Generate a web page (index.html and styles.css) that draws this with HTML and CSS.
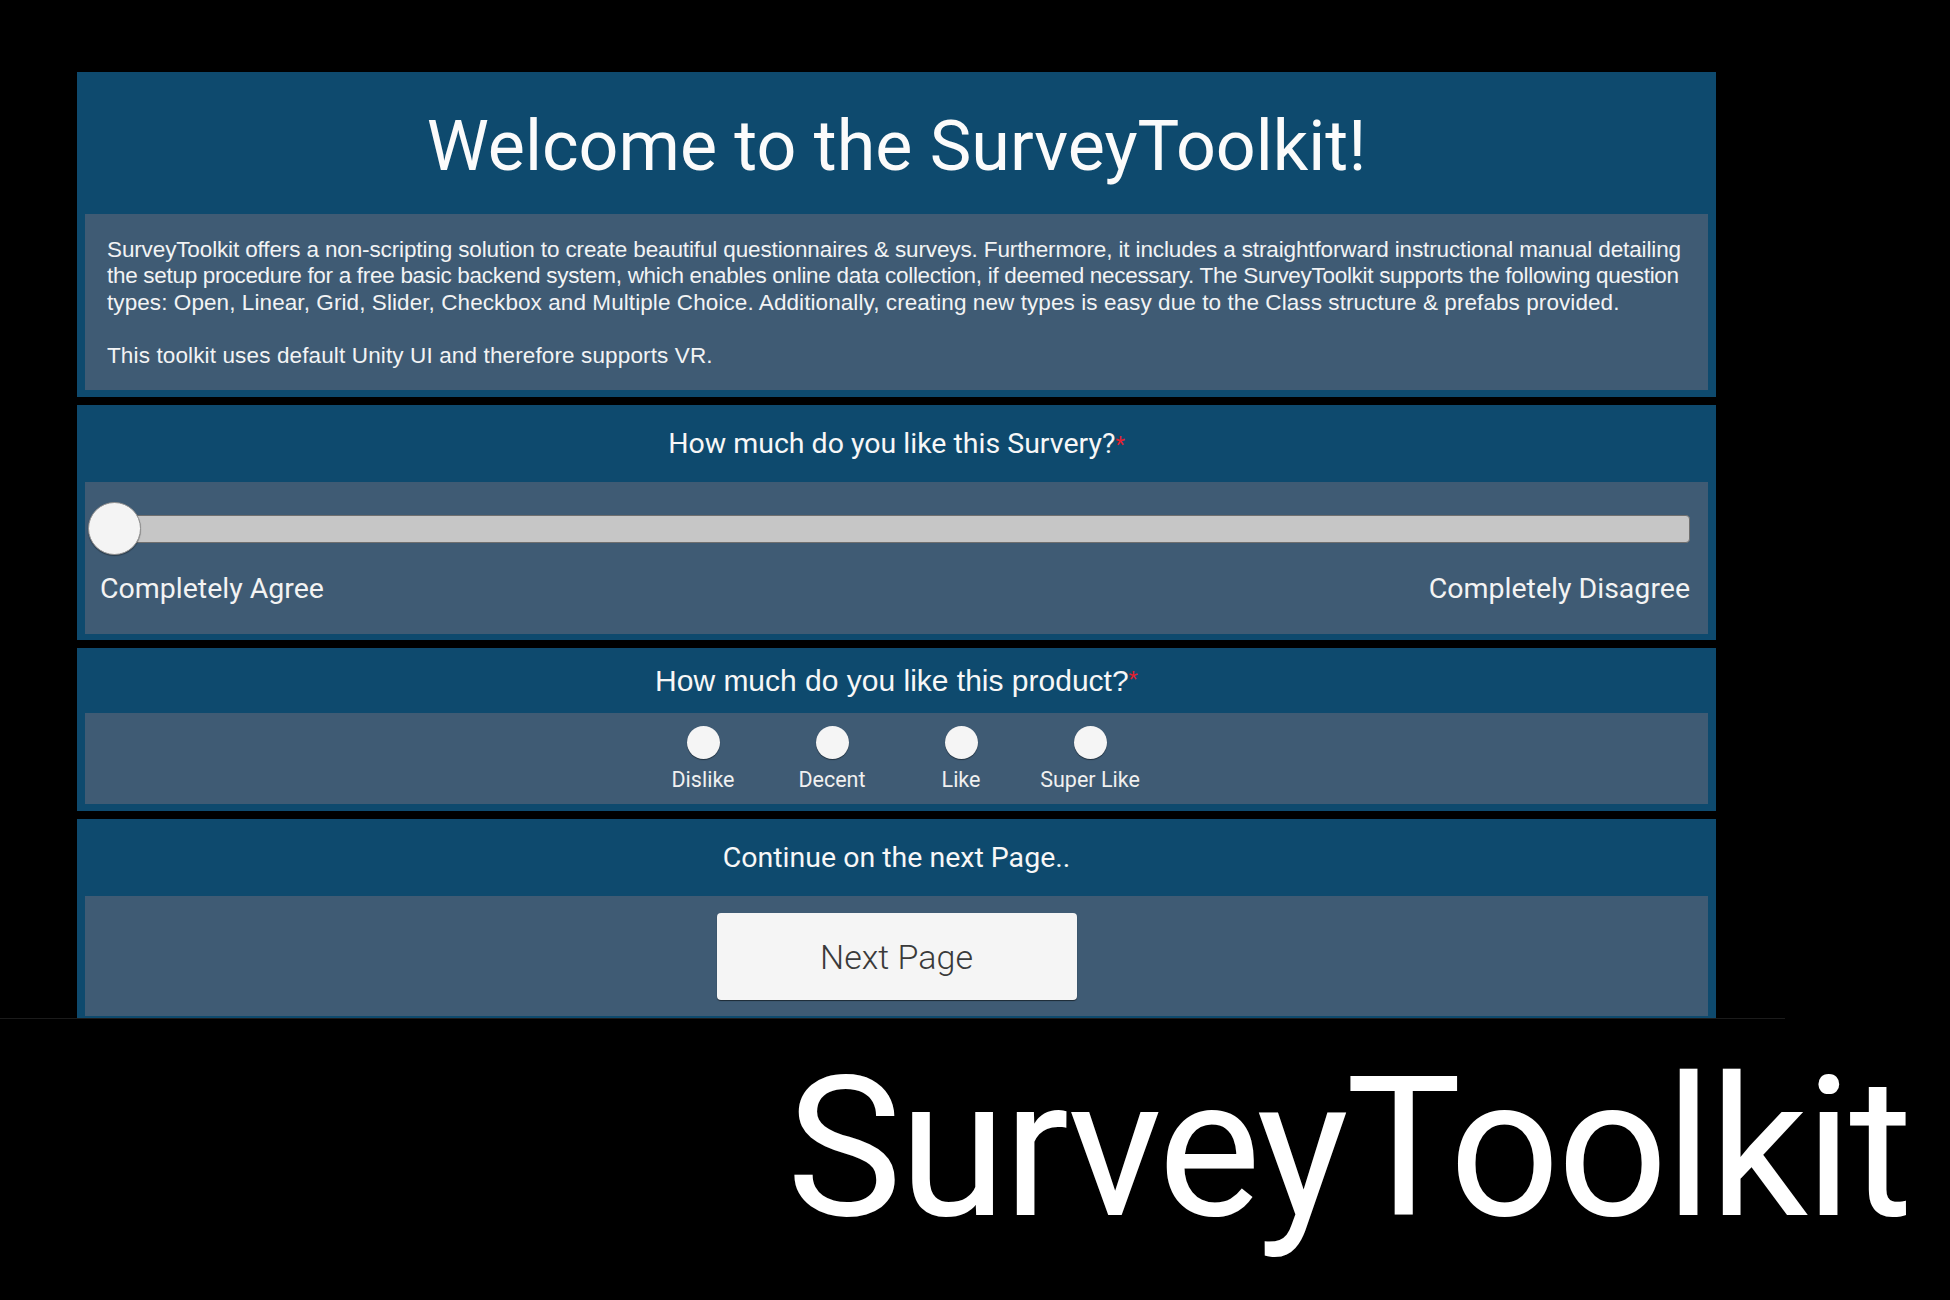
FILE: index.html
```html
<!DOCTYPE html>
<html lang="en">
<head>
<meta charset="utf-8">
<title>SurveyToolkit</title>
<link rel="stylesheet" href="styles.css">
</head>
<body>
<main class="survey">
  <section class="panel">
    <h1 class="welcome-title">Welcome to the SurveyToolkit!</h1>
    <div class="panel-body intro">
      <p class="intro-para">
        <span class="ln ln1">SurveyToolkit offers a non-scripting solution to create beautiful questionnaires &amp; surveys. Furthermore, it includes a straightforward instructional manual detailing</span>
        <span class="ln ln2">the setup procedure for a free basic backend system, which enables online data collection, if deemed necessary. The SurveyToolkit supports the following question</span>
        <span class="ln ln3">types: Open, Linear, Grid, Slider, Checkbox and Multiple Choice. Additionally, creating new types is easy due to the Class structure &amp; prefabs provided.</span>
      </p>
      <p class="intro-para"><span class="ln ln4">This toolkit uses default Unity UI and therefore supports VR.</span></p>
    </div>
  </section>

  <section class="panel panel-slider">
    <h2 class="question question-tall">How much do you like this Survery?<span class="req">*</span></h2>
    <div class="panel-body slider-body">
      <div class="slider">
        <div class="track"><div class="thumb"></div></div>
      </div>
      <div class="slider-labels">
        <span>Completely Agree</span>
        <span>Completely Disagree</span>
      </div>
    </div>
  </section>

  <section class="panel">
    <h2 class="question question-short arial">How much do you like this product?<span class="req">*</span></h2>
    <div class="panel-body choice-body">
      <div class="options">
        <div class="option"><span class="radio"></span><span class="option-label">Dislike</span></div>
        <div class="option"><span class="radio"></span><span class="option-label">Decent</span></div>
        <div class="option"><span class="radio"></span><span class="option-label">Like</span></div>
        <div class="option"><span class="radio"></span><span class="option-label">Super Like</span></div>
      </div>
    </div>
  </section>

  <section class="panel panel-last">
    <h2 class="question question-tall">Continue on the next Page..</h2>
    <div class="panel-body next-body">
      <button class="next-btn" type="button">Next Page</button>
    </div>
  </section>
</main>

<footer class="brand-bar">
  <div class="brand-rule"></div>
  <div class="brand">SurveyToolkit</div>
</footer>
</body>
</html>
```

FILE: styles.css
```css
* {
  box-sizing: border-box;
}

html,
body {
  margin: 0;
  padding: 0;
}

body {
  width: 1950px;
  height: 1300px;
  overflow: hidden;
  background: #000;
  color: #fafafa;
  font-family: Roboto, "Liberation Sans", sans-serif;
}

.survey {
  display: flex;
  flex-direction: column;
  gap: 8px;
  padding: 72px 0 0 77px;
  width: 1716px;
}

.panel {
  background: #0e4a6e;
  padding: 0 8px 7px 8px;
}

.panel-slider {
  padding-bottom: 6px;
}

.panel-last {
  padding-bottom: 2px;
}

.panel-body {
  background: #3f5b74;
}

.welcome-title {
  margin: 0;
  height: 142px;
  padding-top: 6px;
  display: flex;
  align-items: center;
  justify-content: center;
  font-size: 70px;
  font-weight: 400;
  line-height: 1;
  color: #fbfbfb;
}

.intro {
  padding: 23px 22px 21px 22px;
  font-family: "Liberation Sans", Arial, sans-serif;
  font-size: 22.5px;
  line-height: 26.4px;
  color: #f2f3f4;
}

.intro-para {
  margin: 0;
}

.intro-para + .intro-para {
  margin-top: 26.4px;
}

.ln {
  display: block;
  white-space: nowrap;
}

.ln1 { letter-spacing: -0.13px; }
.ln2 { letter-spacing: -0.3px; }
.ln3 { letter-spacing: 0.08px; }
.ln4 { letter-spacing: 0.13px; }

.question {
  margin: 0;
  display: flex;
  align-items: center;
  justify-content: center;
  font-size: 28.5px;
  font-weight: 400;
  line-height: 1;
  color: #f7f7f7;
}

.question-tall {
  height: 77px;
  padding-top: 2px;
}

.question-short {
  height: 65px;
}

.arial {
  font-family: "Liberation Sans", Arial, sans-serif;
  font-size: 30px;
}

.req {
  color: #e3202f;
  align-self: flex-start;
}

.question-tall .req {
  font-size: 22px;
  margin-top: 27px;
}

.question-short .req {
  font-size: 24px;
  margin-top: 20px;
}

/* slider */
.slider-body {
  height: 152px;
  padding: 20px 18px 0 15px;
}

.slider {
  height: 53px;
  display: flex;
  align-items: center;
}

.track {
  position: relative;
  flex: 1;
  height: 28px;
  background: #c6c6c6;
  border: 1px solid #6f6f6f;
  border-radius: 4px;
}

.thumb {
  position: absolute;
  left: -13px;
  top: 50%;
  width: 53px;
  height: 53px;
  margin-top: -26.5px;
  border-radius: 50%;
  background: #f4f4f4;
  border: 1px solid #8e8e8e;
  box-shadow: 0 1px 1px rgba(0, 0, 0, 0.35);
}

.slider-labels {
  display: flex;
  justify-content: space-between;
  margin-top: 20px;
  font-size: 28.5px;
  line-height: 28px;
  color: #f3f3f3;
}

/* multiple choice */
.choice-body {
  height: 91px;
  padding-top: 13px;
}

.options {
  display: flex;
  justify-content: center;
}

.option {
  width: 129px;
  display: flex;
  flex-direction: column;
  align-items: center;
}

.radio {
  width: 33px;
  height: 33px;
  border-radius: 50%;
  background: #f5f5f5;
  box-shadow: 0 1px 1px rgba(0, 0, 0, 0.45);
}

.option-label {
  margin-top: 10px;
  font-size: 21.5px;
  line-height: 22px;
  color: #f0f0f0;
}

/* next page */
.next-body {
  height: 120px;
  padding-top: 17px;
  display: flex;
  justify-content: center;
  align-items: flex-start;
}

.next-btn {
  width: 360px;
  height: 87px;
  border: none;
  border-radius: 4px;
  background: #f5f5f5;
  box-shadow: 0 1px 1px rgba(0, 0, 0, 0.55);
  font-family: Roboto, "Liberation Sans", sans-serif;
  font-size: 34px;
  font-weight: 300;
  color: #3a3a3a;
  padding: 0;
}

/* brand footer */
.brand-bar {
  background: #000;
}

.brand-rule {
  width: 1785px;
  height: 1px;
  background: #1b1b1b;
}

.brand {
  margin-top: 33px;
  padding-right: 40px;
  text-align: right;
  font-size: 194px;
  line-height: 194px;
  letter-spacing: -2.8px;
  color: #fff;
}
```
